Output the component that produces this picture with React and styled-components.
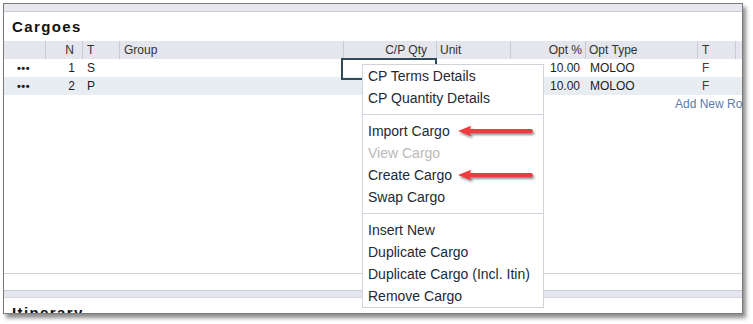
import styled, { createGlobalStyle } from 'styled-components';

const GlobalStyle = createGlobalStyle`
  html, body {
    margin: 0;
    padding: 0;
    background: #ffffff;
  }
  body {
    font-family: "Liberation Sans", Arial, sans-serif;
  }
`;

const Page = styled.div`
  width: 753px;
  height: 324px;
  padding: 3px 0 0 3px;
  box-sizing: border-box;
  background: #ffffff;
`;

const Frame = styled.div`
  position: relative;
  width: 740px;
  height: 311px;
  box-sizing: border-box;
  border: 1px solid #7a7a7a;
  box-shadow: 3px 4px 4px rgba(0, 0, 0, 0.45);
  overflow: hidden;
  display: flex;
  flex-direction: column;
  background: #ffffff;
`;

const TopBand = styled.div`
  flex-shrink: 0;
  height: 7px;
  background: #e7e8ee;
  border-bottom: 1px solid #c9ccd6;
`;

const SectionTitle = styled.div`
  flex-shrink: 0;
  height: 29px;
  line-height: 29px;
  padding-left: 8px;
  font-size: 15px;
  font-weight: bold;
  letter-spacing: 1.4px;
  color: #111111;
`;

const GridArea = styled.div`
  flex-shrink: 0;
  width: 760px;
  height: 232px;
  border-bottom: 1px solid #cfd2da;
`;

const Row = styled.div`
  display: grid;
  grid-template-columns: 42px 37px 37px 224px 93px 74px 75px 112px 38px 1fr;
  height: 18px;
  line-height: 18px;
  font-size: 12px;
  background: ${(p) => (p.$header ? '#e4e5ed' : p.$alt ? '#e8edf1' : '#ffffff')};
  color: ${(p) => (p.$header ? '#333333' : '#1c1c1c')};
`;

const Cell = styled.div`
  box-sizing: border-box;
  white-space: nowrap;
  overflow: hidden;
  text-align: ${(p) => (p.$right ? 'right' : 'left')};
  padding: ${(p) => (p.$right ? `0 ${p.$pr ?? 7}px 0 0` : `0 0 0 ${p.$pl ?? 4}px`)};
  border-right: ${(p) => (p.$header ? '1px solid #c8cad4' : 'none')};
  color: ${(p) => (p.$flag ? '#8b1a1a' : 'inherit')};
`;

const Dots = styled.span`
  font-weight: bold;
  letter-spacing: 0.5px;
  font-size: 11px;
`;

const AddRow = styled.div`
  height: 18px;
  line-height: 18px;
  font-size: 12px;
  padding-left: 671px;
  color: #5a7ca8;
  white-space: nowrap;
`;

const Gap = styled.div`
  flex-shrink: 0;
  height: 16px;
`;

const Band = styled.div`
  flex-shrink: 0;
  height: 6px;
  background: #e4e5ee;
  border-top: 1px solid #c9ccd6;
  border-bottom: 1px solid #d6d8e0;
`;

const SelectedCell = styled.div`
  position: absolute;
  left: 337px;
  top: 54px;
  width: 96px;
  height: 22px;
  box-sizing: border-box;
  border: 2px solid #2e4b5a;
`;

const Menu = styled.div`
  position: absolute;
  left: 358px;
  top: 60px;
  width: 182px;
  box-sizing: border-box;
  background: #ffffff;
  border: 1px solid #d0d3dc;
  font-size: 14px;
  color: #222a35;
`;

const MenuItem = styled.div`
  height: 22px;
  line-height: 22px;
  padding-left: 5px;
  white-space: nowrap;
  color: ${(p) => (p.$disabled ? '#b9b9b9' : '#222a35')};
`;

const MenuSep = styled.div`
  height: 11px;
  display: flex;
  align-items: center;
  &::after {
    content: '';
    flex: 1;
    height: 1px;
    background: #d0d3dc;
  }
`;

const ArrowWrap = styled.svg`
  position: absolute;
  left: 447px;
  top: ${(p) => p.$top}px;
  overflow: visible;
`;

const columns = [
  { key: 'menu', label: '' },
  { key: 'n', label: 'N', right: true, pr: 8 },
  { key: 't', label: 'T' },
  { key: 'group', label: 'Group' },
  { key: 'qty', label: 'C/P Qty', right: true, pr: 9 },
  { key: 'unit', label: 'Unit', pl: 3 },
  { key: 'opt', label: 'Opt %', right: true, pr: 3 },
  { key: 'optType', label: 'Opt Type', pl: 3 },
  { key: 'flag', label: 'T', pl: 4 },
  { key: 'rest', label: '' },
];

const rows = [
  { n: '1', t: 'S', opt: '10.00', optType: 'MOLOO', flag: 'F' },
  { n: '2', t: 'P', opt: '10.00', optType: 'MOLOO', flag: 'F' },
];

const menuGroups = [
  [{ label: 'CP Terms Details' }, { label: 'CP Quantity Details' }],
  [
    { label: 'Import Cargo' },
    { label: 'View Cargo', disabled: true },
    { label: 'Create Cargo' },
    { label: 'Swap Cargo' },
  ],
  [
    { label: 'Insert New' },
    { label: 'Duplicate Cargo' },
    { label: 'Duplicate Cargo (Incl. Itin)' },
    { label: 'Remove Cargo' },
  ],
];

// red callout arrow pointing left at a menu entry
const Arrow = ({ top }) => (
  <ArrowWrap $top={top} width="84" height="18" viewBox="0 0 84 18">
    <defs>
      <filter id={`sh${top}`} x="-20%" y="-60%" width="140%" height="220%">
        <feDropShadow dx="1.5" dy="2" stdDeviation="1.3" floodColor="#000" floodOpacity="0.45" />
      </filter>
    </defs>
    <g filter={`url(#sh${top})`}>
      <path d="M7 9 L20 3.8 L18.5 9 L20 14.2 Z" fill="#ef3b3f" />
      <path d="M17 9 L80 9" stroke="#ef3b3f" strokeWidth="3.8" strokeLinecap="round" />
    </g>
  </ArrowWrap>
);

export default function App() {
  return (
    <Page>
      <GlobalStyle />
      <Frame>
        <TopBand />
        <SectionTitle>Cargoes</SectionTitle>
        <GridArea>
          <Row $header>
            {columns.map((c) => (
              <Cell key={c.key} $header $right={c.right} $pr={c.pr} $pl={c.pl}>
                {c.label}
              </Cell>
            ))}
          </Row>
          {rows.map((r, i) => (
            <Row key={r.n} $alt={i % 2 === 1}>
              <Cell $pl={13}>
                <Dots>•••</Dots>
              </Cell>
              <Cell $right $pr={8}>{r.n}</Cell>
              <Cell>{r.t}</Cell>
              <Cell />
              <Cell />
              <Cell />
              <Cell $right $pr={6}>{r.opt}</Cell>
              <Cell $pl={4}>{r.optType}</Cell>
              <Cell $flag>{r.flag}</Cell>
              <Cell />
            </Row>
          ))}
          <AddRow>Add New Row</AddRow>
        </GridArea>
        <Gap />
        <Band />
        <SectionTitle>Itinerary</SectionTitle>

        <SelectedCell />
        <Menu>
          {menuGroups.map((group, gi) => (
            <div key={gi}>
              {gi > 0 && <MenuSep />}
              {group.map((item) => (
                <MenuItem key={item.label} $disabled={item.disabled}>
                  {item.label}
                </MenuItem>
              ))}
            </div>
          ))}
        </Menu>
        <Arrow top={118} />
        <Arrow top={162} />
      </Frame>
    </Page>
  );
}
